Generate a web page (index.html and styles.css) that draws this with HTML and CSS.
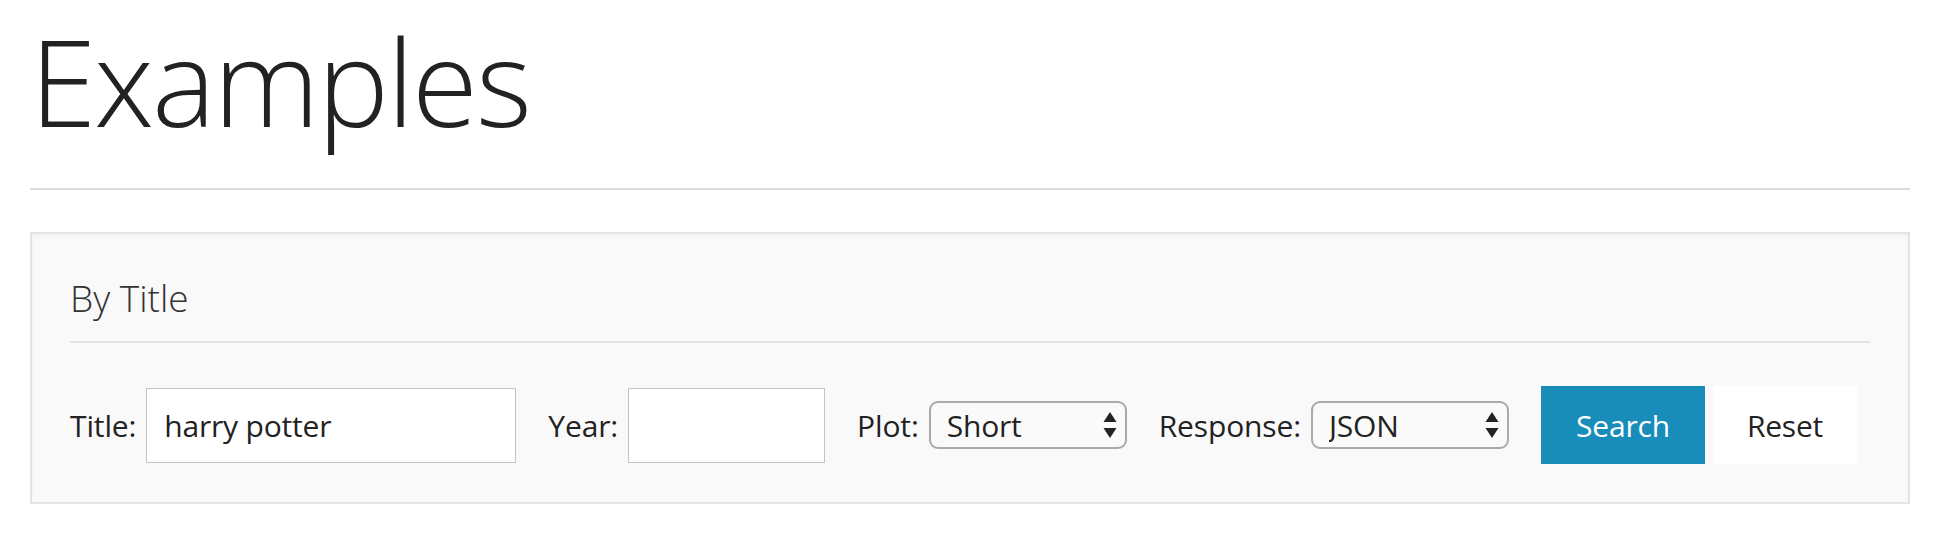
FILE: index.html
```html
<!DOCTYPE html>
<html lang="en">
<head>
<meta charset="utf-8">
<title>Examples</title>
<link rel="stylesheet" href="styles.css">
</head>
<body>
<div class="container">
  <h1 class="page-title">Examples</h1>
  <div class="rule"></div>
  <section class="panel">
    <h2 class="panel-title">By Title</h2>
    <div class="panel-rule"></div>
    <form class="search-row">
      <div class="group">
        <label class="lbl" for="t">Title:</label>
        <input class="field field-title" id="t" type="text" value="harry potter">
      </div>
      <div class="group">
        <label class="lbl" for="y">Year:</label>
        <input class="field field-year" id="y" type="text" value="">
      </div>
      <div class="group">
        <label class="lbl" for="p">Plot:</label>
        <span class="select-wrap">
          <select class="select" id="p"><option>Short</option><option>Full</option></select>
          <svg class="arrows" width="14" height="26" viewBox="0 0 14 26"><path d="M7 0 L13.5 10 L0.5 10 Z" fill="#222"/><path d="M7 26 L13.5 16 L0.5 16 Z" fill="#222"/></svg>
        </span>
      </div>
      <div class="group">
        <label class="lbl" for="r">Response:</label>
        <span class="select-wrap">
          <select class="select" id="r"><option>JSON</option><option>XML</option></select>
          <svg class="arrows" width="14" height="26" viewBox="0 0 14 26"><path d="M7 0 L13.5 10 L0.5 10 Z" fill="#222"/><path d="M7 26 L13.5 16 L0.5 16 Z" fill="#222"/></svg>
        </span>
      </div>
      <div class="buttons">
        <button class="btn btn-primary" type="button">Search</button>
        <button class="btn btn-plain" type="reset">Reset</button>
      </div>
    </form>
  </section>
</div>
</body>
</html>
```

FILE: styles.css
```css
html, body {
  margin: 0;
  padding: 0;
  background: #fff;
}
body {
  font-family: "Open Sans", "Liberation Sans", sans-serif;
  color: #222;
}
.container {
  margin-left: 30px;
  width: 1880px;
}
.page-title {
  margin: 0;
  padding: 21px 0 0 0;
  font-size: 120px;
  font-weight: 300;
  line-height: 120px;
  letter-spacing: -2px;
  color: #222;
}
.rule {
  margin-top: 47px;
  height: 2px;
  background: #dcdcdc;
}
.panel {
  margin-top: 42px;
  border: 2px solid #e4e4e4;
  background: #f9f9f9;
  box-shadow: inset 0 2px 3px rgba(0, 0, 0, 0.04);
  padding: 42px 38px 38px 38px;
}
.panel-title {
  margin: 0;
  font-size: 37px;
  font-weight: 300;
  line-height: 44px;
  color: #333;
}
.panel-rule {
  margin-top: 21px;
  height: 2px;
  background: #e3e3e3;
}
.search-row {
  margin-top: 43px;
  display: flex;
  align-items: center;
  height: 78px;
  gap: 32px;
}
.group {
  display: flex;
  align-items: center;
  gap: 10px;
}
.lbl {
  font-size: 30px;
  letter-spacing: -0.13px;
  color: #222;
}
.field {
  box-sizing: border-box;
  height: 75px;
  border: 1px solid #c4c4c4;
  background: #fff;
  padding: 0 17px;
  font-family: inherit;
  font-size: 30px;
  letter-spacing: -0.2px;
  color: #222;
  outline: none;
}
.field-title { width: 370px; }
.field-year { width: 197px; }
.select-wrap {
  position: relative;
  display: inline-block;
}
.select {
  -webkit-appearance: none;
  appearance: none;
  box-sizing: border-box;
  width: 198px;
  height: 48px;
  border: 2px solid #aaa;
  border-radius: 9px;
  background: #fafafa;
  padding: 0 0 0 16px;
  font-family: inherit;
  font-size: 30px;
  letter-spacing: -0.2px;
  color: #222;
  outline: none;
}
.arrows {
  position: absolute;
  right: 10px;
  top: 11px;
  pointer-events: none;
}
.buttons {
  display: flex;
  gap: 8px;
}
.btn {
  height: 78px;
  border: 0;
  font-family: inherit;
  font-size: 30px;
  letter-spacing: -0.2px;
  padding: 0;
  cursor: pointer;
}
.btn-primary {
  width: 164px;
  background: #188dba;
  color: #fff;
}
.btn-plain {
  width: 144px;
  background: #fff;
  color: #222;
}
```
